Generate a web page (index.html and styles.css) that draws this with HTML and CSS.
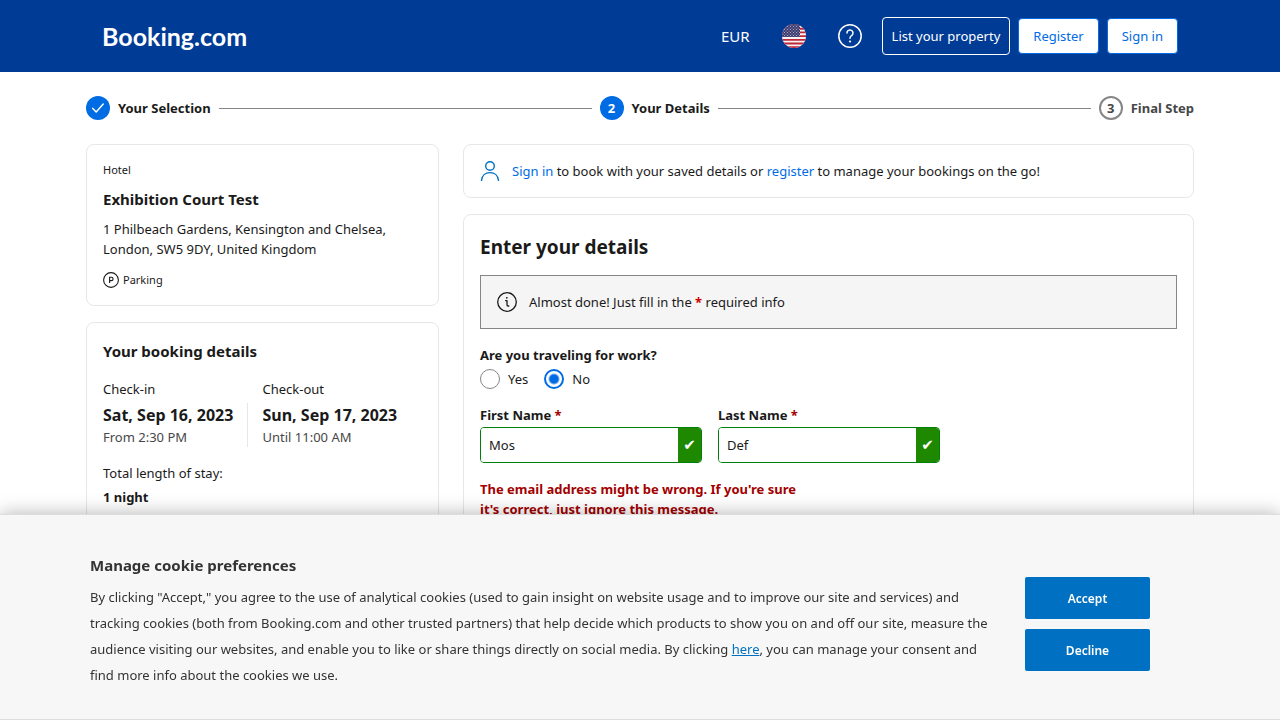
FILE: index.html
```html
<!DOCTYPE html>
<html lang="en">
<head>
<meta charset="utf-8">
<meta name="viewport" content="width=device-width, initial-scale=1">
<title>Booking.com: Your Details</title>
<link rel="stylesheet" href="styles.css">
</head>
<body>
<header class="header">
  <div class="header-inner">
    <a class="logo" href="#">Booking.com</a>
    <nav class="nav" aria-label="Main">
      <button class="nav-currency" type="button">EUR</button>
      <button class="nav-icon" type="button" aria-label="Language: English (US)">
        <svg width="24" height="24" viewBox="0 0 24 24" aria-hidden="true">
          <defs>
            <clipPath id="disc"><circle cx="12" cy="12" r="12"/></clipPath>
            <pattern id="stars" width="3" height="3" patternUnits="userSpaceOnUse"><circle cx="1" cy="1" r=".6" fill="#b5b3d2"/><circle cx="2.5" cy="2.5" r=".6" fill="#b5b3d2"/></pattern>
          </defs>
          <g clip-path="url(#disc)">
            <rect width="24" height="24" fill="#f6f3f3"/>
            <path d="M0 1h24M0 4.700h24M0 8.400h24M0 12.100h24M0 15.800h24M0 19.500h24M0 23.200h24" stroke="#c0283a" stroke-width="1.850"/>
            <rect width="18" height="13" fill="#3c3b6e"/>
            <rect width="18" height="13" fill="url(#stars)"/>
          </g>
        </svg>
      </button>
      <button class="nav-icon" type="button" aria-label="Help">
        <svg width="24" height="24" viewBox="0 0 24 24" fill="none" stroke="#fff" stroke-width="1.500" stroke-linecap="round" aria-hidden="true">
          <circle cx="12" cy="12" r="11.200"/>
          <path d="M9 9a3 3 0 1 1 4.600 2.500c-1 .7-1.600 1.300-1.600 2.700"/>
          <circle cx="12" cy="17.500" r="1.100" fill="#fff" stroke="none"/>
        </svg>
      </button>
      <a class="btn btn-outline" href="#">List your property</a>
      <a class="btn btn-light" href="#">Register</a>
      <a class="btn btn-light" href="#">Sign in</a>
    </nav>
  </div>
</header>

<main class="page">
  <ol class="steps">
    <li class="step">
      <span class="step-dot">
        <svg width="24" height="24" viewBox="0 0 24 24" fill="none" stroke="#fff" stroke-width="1.500" stroke-linecap="round" stroke-linejoin="round" aria-hidden="true"><path d="M6.800 12.400l3.400 3.600 7-8"/></svg>
      </span>
      <span>Your Selection</span>
    </li>
    <li class="step-line" role="presentation"></li>
    <li class="step"><span class="step-dot">2</span><span>Your Details</span></li>
    <li class="step-line" role="presentation"></li>
    <li class="step step-next"><span class="step-dot">3</span><span>Final Step</span></li>
  </ol>

  <div class="columns">
    <aside class="stack">
      <section class="card">
        <p class="small">Hotel</p>
        <h2 class="title hotel-name">Exhibition Court Test</h2>
        <p class="address">1 Philbeach Gardens, Kensington and Chelsea, London, SW5 9DY, United Kingdom</p>
        <p class="small facility">
          <svg width="16" height="16" viewBox="0 0 16 16" fill="none" stroke="#1a1a1a" stroke-width="1.100" aria-hidden="true"><circle cx="8" cy="8" r="7.400"/><path d="M6.600 11V5.200h1.800a1.700 1.700 0 0 1 0 3.400H6.600"/></svg>
          <span>Parking</span>
        </p>
      </section>
      <section class="card booking">
        <h2 class="title">Your booking details</h2>
        <div class="dates">
          <div>
            <p>Check-in</p>
            <div class="date date-first"><p class="date-day">Sat, Sep 16, 2023</p><p class="muted">From 2:30 PM</p></div>
          </div>
          <div>
            <p>Check-out</p>
            <div class="date"><p class="date-day">Sun, Sep 17, 2023</p><p class="muted">Until 11:00 AM</p></div>
          </div>
        </div>
        <p class="stay-label">Total length of stay:</p>
        <p class="strong">1 night</p>
      </section>
    </aside>

    <div class="stack">
      <section class="card row">
        <svg class="row-icon" width="20" height="20" viewBox="0 0 20 20" fill="none" stroke="#0071c2" stroke-width="1.400" stroke-linecap="round" aria-hidden="true"><circle cx="10" cy="5" r="4.300"/><path d="M1.500 19.400C1.900 14.600 5.400 11.600 10 11.600s8.100 3 8.500 7.800"/></svg>
        <p><a class="link" href="#">Sign in</a> to book with your saved details or <a class="link" href="#">register</a> to manage your bookings on the go!</p>
      </section>

      <form class="card details">
        <h1 class="form-title">Enter your details</h1>
        <div class="notice row">
          <svg class="row-icon" width="20" height="20" viewBox="0 0 20 20" fill="none" stroke="#1a1a1a" stroke-width="1.300" stroke-linecap="round" stroke-linejoin="round" aria-hidden="true"><circle cx="10" cy="10" r="9.300"/><path d="M8.600 8.600h1.400v4.200a1.200 1.200 0 0 0 1.200 1.200h.6"/><circle cx="9.800" cy="5.800" r=".9" fill="#1a1a1a" stroke="none"/></svg>
          <p>Almost done! Just fill in the <span class="star-bright">*</span> required info</p>
        </div>

        <fieldset class="group">
          <legend class="strong">Are you traveling for work?</legend>
          <div class="radios">
            <label class="radio"><input type="radio" name="work" value="yes"><span>Yes</span></label>
            <label class="radio"><input type="radio" name="work" value="no" checked><span>No</span></label>
          </div>
        </fieldset>

        <div class="names">
          <div class="name">
            <label class="strong" for="first">First Name <span class="star">*</span></label>
            <div class="field"><input id="first" type="text" value="Mos"><span class="field-ok">✔</span></div>
          </div>
          <div class="name">
            <label class="strong" for="last">Last Name <span class="star">*</span></label>
            <div class="field"><input id="last" type="text" value="Def"><span class="field-ok">✔</span></div>
          </div>
        </div>
        <p class="error">The email address might be wrong. If you're sure it's correct, just ignore this message.</p>
      </form>
    </div>
  </div>
</main>

<section class="cookies" aria-label="Cookies">
  <div class="cookies-inner">
    <div class="cookies-text">
      <h2 class="cookies-title">Manage cookie preferences</h2>
      <p>By clicking "Accept," you agree to the use of analytical cookies (used to gain insight on website usage and to improve our site and services) and tracking cookies (both from Booking.com and other trusted partners) that help decide which products to show you on and off our site, measure the audience visiting our websites, and enable you to like or share things directly on social media. By clicking <a class="cookies-link" href="#">here</a>, you can manage your consent and find more info about the cookies we use.</p>
    </div>
    <div class="cookies-actions">
      <button class="cookies-btn" type="button">Accept</button>
      <button class="cookies-btn" type="button">Decline</button>
    </div>
  </div>
</section>
</body>
</html>
```
FILE: styles.css
```css
* { box-sizing: border-box; }

body {
  margin: 0;
  background: #fff;
  color: #1a1a1a;
  font: 13px/20px "Noto Sans", "Open Sans", sans-serif;
}

h1, h2, p, ol, fieldset { margin: 0; padding: 0; border: 0; }
legend { padding: 0; }
a { color: inherit; text-decoration: none; }
button, input { font: inherit; color: inherit; }

.header { background: #003b95; color: #fff; }
.header-inner {
  display: flex;
  align-items: center;
  justify-content: space-between;
  max-width: 1140px;
  min-height: 72px;
  margin: 0 auto;
  padding: 0 32px;
}
.logo { font: bold 25px/32px Lato, sans-serif; }
.nav { display: flex; align-items: center; gap: 8px; }
.nav-currency, .nav-icon {
  padding: 8px 12px;
  border: 0;
  background: none;
  cursor: pointer;
}
.nav-currency { font-size: 15px; line-height: 24px; }
.nav-icon { display: flex; }
.btn { border: 1px solid; border-radius: 4px; line-height: 20px; white-space: nowrap; }
.btn-outline { padding: 8px 9px; border-color: #fff; }
.btn-light { padding: 7px 14px; border-color: #006ce4; background: #fff; color: #006ce4; }

.page { max-width: 1140px; margin: 0 auto; padding: 24px 16px; }

.steps { display: flex; align-items: center; gap: 8px; margin-bottom: 24px; list-style: none; font-weight: bold; }
.step { display: flex; align-items: center; gap: 8px; white-space: nowrap; }
.step-dot {
  display: flex;
  align-items: center;
  justify-content: center;
  width: 24px;
  height: 24px;
  border-radius: 50%;
  background: #006ce4;
  color: #fff;
}
.step-next { color: #474747; }
.step-next .step-dot { border: 2px solid #868686; background: #fff; color: #474747; }
.step-line { flex: 1; height: 1px; background: #868686; }

.columns { display: grid; grid-template-columns: 353fr 731fr; gap: 24px; }
.stack { display: flex; flex-direction: column; gap: 16px; min-width: 0; }
.card { padding: 16px; border: 1px solid #e7e7e7; border-radius: 8px; }
.title { font-size: 15px; font-weight: bold; line-height: 24px; }
.strong { font-weight: bold; }
.small { font-size: 11px; line-height: 18px; }
.muted { color: #474747; }
.link { color: #006ce4; }

.hotel-name { margin: 8px 0; }
.facility { display: flex; align-items: center; gap: 4px; margin-top: 12px; }

.booking { padding-bottom: 32px; }
.dates { display: grid; grid-template-columns: 1fr 1fr; margin: 16px 0; }
.date { margin-top: 4px; white-space: nowrap; }
.date-first { margin-right: 15px; border-right: 1px solid #e7e7e7; }
.date-day { font-size: 16px; font-weight: bold; line-height: 24px; }
.stay-label { margin-bottom: 4px; }

.row { display: flex; align-items: center; gap: 12px; }
.row-icon { flex: none; }

.details { padding-bottom: 32px; }
.form-title { font-size: 19px; line-height: 32px; }
.notice { margin: 12px 0 16px; padding: 16px; border: 1px solid #868686; background: #f5f5f5; }
.star-bright { color: #cc0000; font-weight: bold; }
.star { color: #a30000; }

.radios { display: flex; gap: 16px; margin: 4px 0 16px; }
.radio { display: flex; align-items: center; gap: 8px; }
.radio input {
  width: 20px;
  height: 20px;
  margin: 0;
  border: 1px solid #868686;
  border-radius: 50%;
  appearance: none;
}
.radio input:checked {
  border: 2px solid #006ce4;
  background: radial-gradient(circle, #006ce4 4px, #fff 6px);
}

.names { display: grid; grid-template-columns: 1fr 1fr; gap: 16px; width: 66%; margin-bottom: 16px; }
.name { min-width: 0; }
.field { display: flex; height: 36px; margin-top: 2px; border: 1px solid #008009; border-radius: 4px; overflow: hidden; }
.field input { flex: 1; min-width: 0; padding: 0 8px; border: 0; background: #fff; outline: 0; }
.field-ok {
  display: flex;
  align-items: center;
  justify-content: center;
  width: 23px;
  background: #1e8900;
  color: #fff;
  font-family: "DejaVu Sans", sans-serif;
  font-size: 15px;
}
.error { width: 48%; color: #a30000; font-weight: bold; }

.cookies {
  position: fixed;
  right: 0;
  bottom: 0;
  left: 0;
  border: solid #ddd;
  border-width: 1px 0;
  background: #f7f7f7;
  box-shadow: 0 0 18px rgba(0, 0, 0, 0.3);
  color: #333;
}
.cookies-inner { display: flex; gap: 30px; max-width: 1100px; margin: 0 auto; padding: 37px 40px 31px 0; }
.cookies-text { flex: 1; line-height: 26px; }
.cookies-title { margin-bottom: 6px; font-size: 15px; line-height: 26px; }
.cookies-link { color: #0071c2; text-decoration: underline; }
.cookies-actions { display: flex; flex-direction: column; gap: 10px; width: 125px; padding-top: 25px; }
.cookies-btn {
  height: 42px;
  padding: 2px 0 0;
  border: 0;
  border-radius: 2px;
  background: #0071c2;
  color: #fff;
  font-size: 12px;
  font-weight: 600;
  cursor: pointer;
}
```
